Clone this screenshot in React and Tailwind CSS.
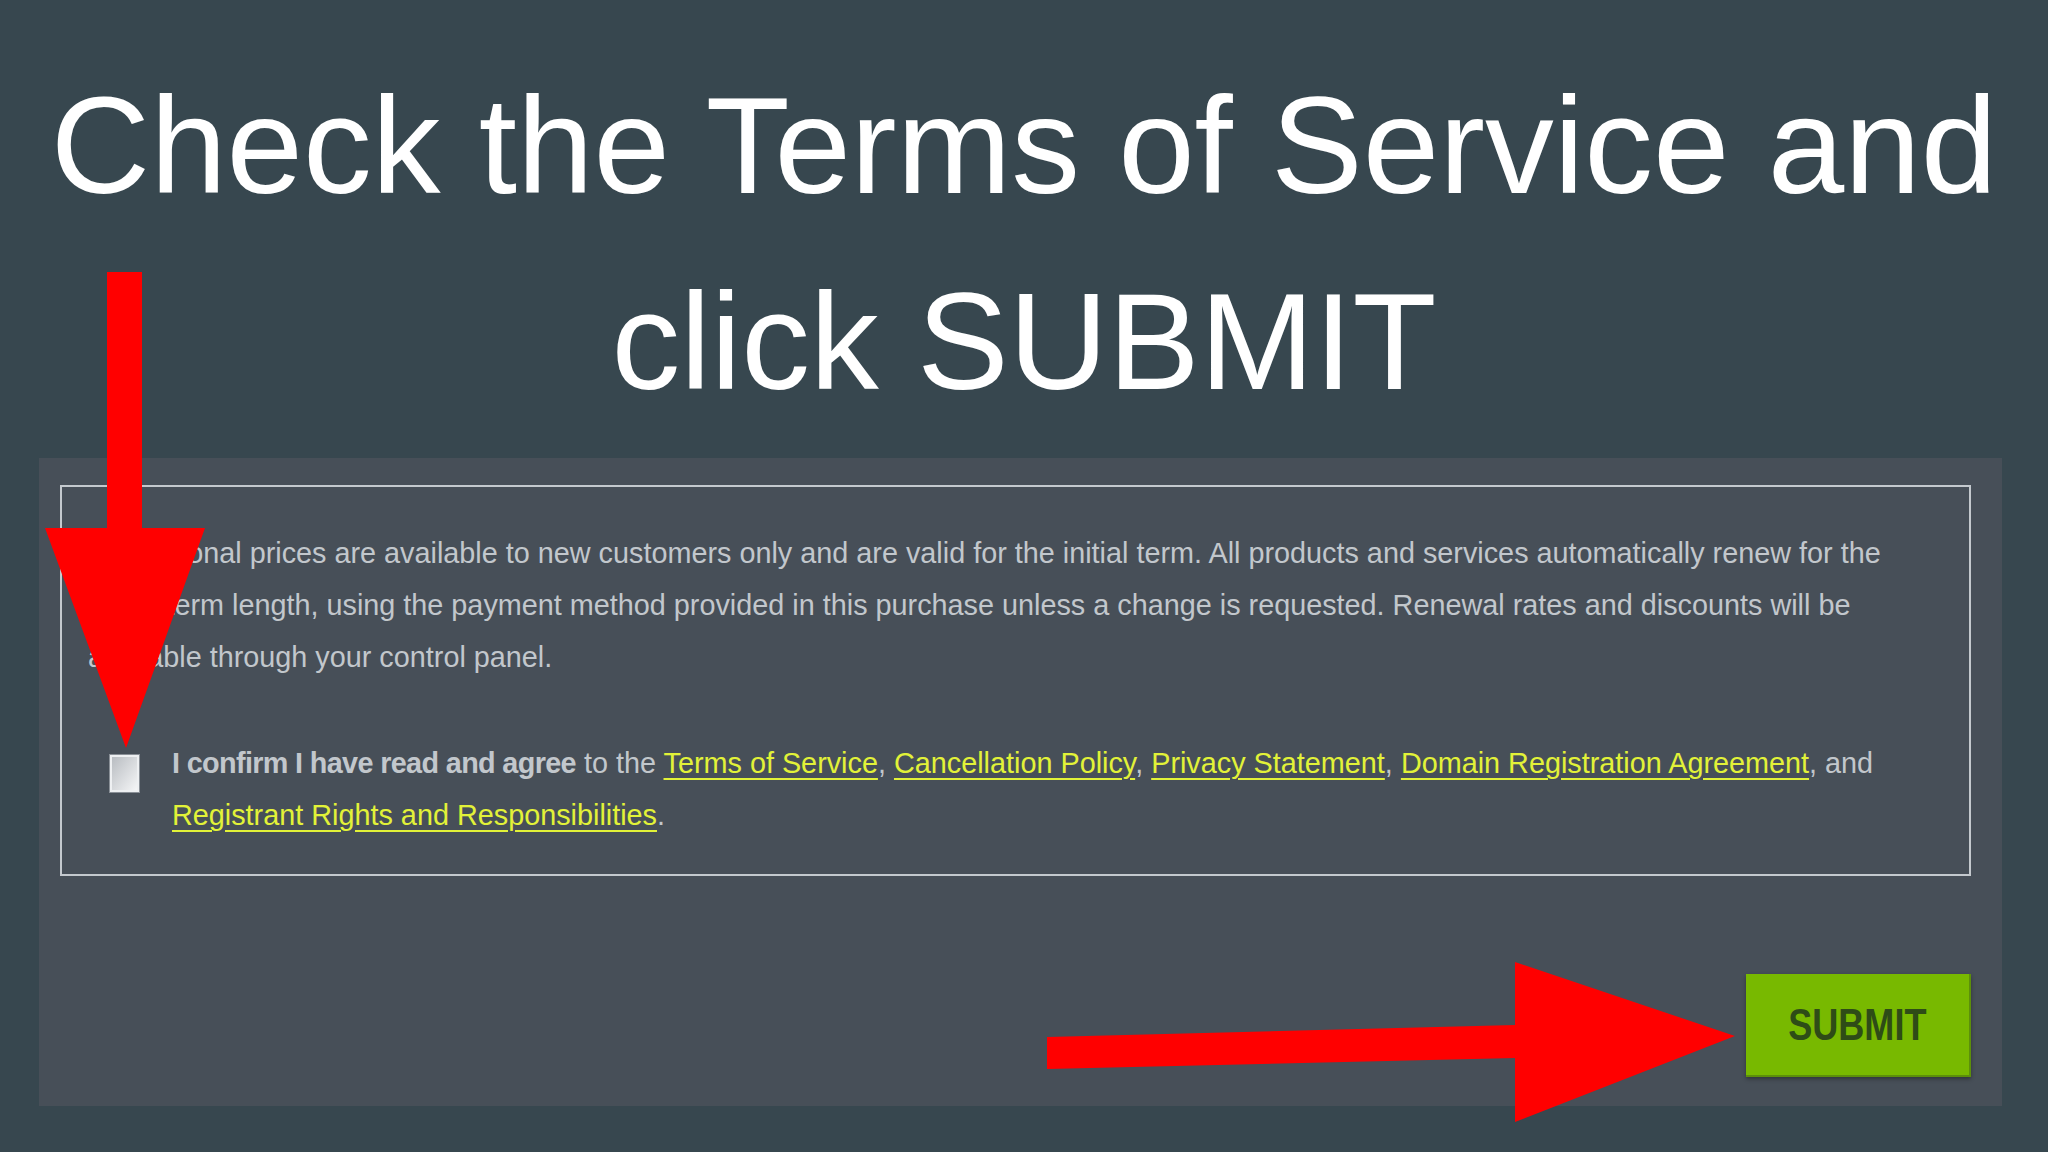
import React from 'react';

const linkClass =
    'text-[#e2f238] underline decoration-[#e2f238] decoration-2 underline-offset-[5px]';

function Arrows() {
    // red callout arrows drawn over the form
    return (
        <svg
            className="pointer-events-none absolute inset-0 h-full w-full"
            viewBox="0 0 2048 1152"
            preserveAspectRatio="none"
        >
            <polygon
                fill="#ff0000"
                points="107,272 142,272 142,528 205,528 126,748 45,528 107,528"
            />
            <polygon
                fill="#ff0000"
                points="1047,1037 1515,1025 1515,962 1735,1036 1515,1122 1515,1058 1047,1069"
            />
        </svg>
    );
}

export default function App() {
    return (
        <div
            className="relative h-[1152px] w-[2048px] overflow-hidden bg-[#37474f] pt-[48px]"
            style={{ fontFamily: '"Liberation Sans", Arial, sans-serif' }}
        >
            <h1 className="text-center text-[137.5px] leading-[196px] font-normal text-white">
                Check the Terms of Service and
                <br />
                click SUBMIT
            </h1>

            {/* checkout panel */}
            <div className="ml-[39px] mt-[18px] w-[1963px] bg-[#474f58] pl-[21px] pr-[31px] pt-[27px] pb-[29px]">
                <div className="border-2 border-[#c4c9ce] pl-[26px] pr-[6px] pt-[40px] pb-[33px] text-[28.8px] leading-[52px] text-[#c2c7cc]">
                    <p className="max-w-[1835px]">
                        Promotional prices are available to new customers only and are valid for the initial
                        term. All products and services automatically renew for the same term length, using the
                        payment method provided in this purchase unless a change is requested. Renewal rates and
                        discounts will be available through your control panel.
                    </p>

                    <div className="mt-[54px] flex items-start">
                        <div className="ml-[22px] mt-[18px] h-[37px] w-[29px] shrink-0 border-2 border-[#eef0f2] bg-gradient-to-br from-[#b9bdc2] to-[#f4f5f6] shadow-[0_0_0_1px_#8a9097]" />
                        <p className="ml-[33px] flex-1">
                            <span className="font-bold tracking-[-0.65px]">I confirm I have read and agree</span> to
                            the <a className={linkClass}>Terms of Service</a>,{' '}
                            <a className={linkClass}>Cancellation Policy</a>,{' '}
                            <a className={linkClass}>Privacy Statement</a>,{' '}
                            <a className={linkClass}>Domain Registration Agreement</a>, and{' '}
                            <a className={linkClass}>Registrant Rights and Responsibilities</a>.
                        </p>
                    </div>
                </div>

                <div className="mt-[98px] flex justify-end">
                    <button
                        type="button"
                        className="flex h-[103px] w-[225px] items-center justify-center border-b-2 border-r-2 border-[#5c8f0a] bg-[#78b900] shadow-[0_2px_4px_rgba(0,0,0,0.35)]"
                    >
                        <span className="inline-block scale-x-[0.82] text-[44px] font-bold leading-none text-[#2e4c17]">
                            SUBMIT
                        </span>
                    </button>
                </div>
            </div>

            <Arrows />
        </div>
    );
}
